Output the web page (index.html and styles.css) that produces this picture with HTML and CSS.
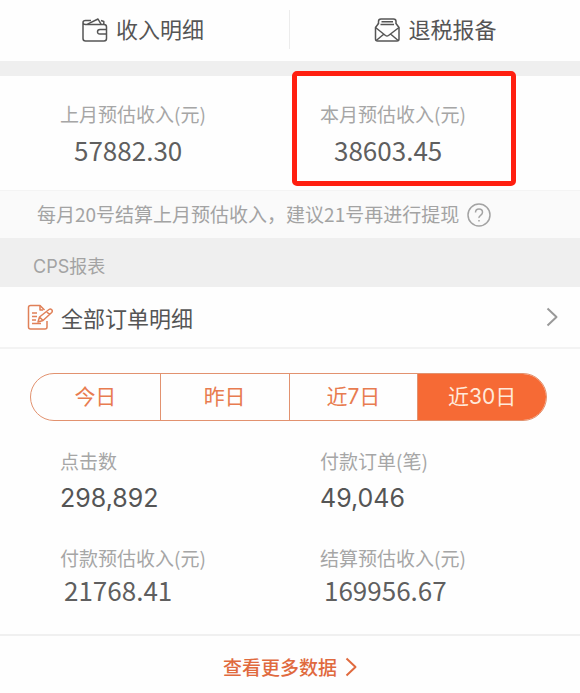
FILE: index.html
```
<!DOCTYPE html>
<html lang="zh-CN">
<head>
    <meta charset="UTF-8">
    <meta name="viewport" content="width=device-width, initial-scale=1.0">
    <title>CPS报表</title>
    <link rel="stylesheet" href="styles.css">
</head>
<body>

    <!-- Top navigation -->
    <nav class="top-nav">
        <a class="nav-item" href="#income">
            <svg class="nav-icon" viewBox="0 0 28 26" aria-hidden="true">
                <path d="M2 5.500V21.500q0 2.500 2.500 2.500H23q2.500 0 2.500-2.500V10q0-2.500-2.500-2.500H4.500Q2 7.500 2 5.500T4.500 3.500H10"/>
                <path d="M6.500 7.200L17 2l3 5.200M20 3.500l2.800 1v2.500"/>
                <path d="M25.500 12.500H19q-2.500 0-2.500 2.300t2.500 2.200h6.500"/>
            </svg>
            <span>收入明细</span>
        </a>
        <a class="nav-item" href="#tax">
            <svg class="nav-icon" viewBox="0 0 28 26" aria-hidden="true">
                <path d="M5.500 6.500L2.500 10.500V22q0 2 2 2H24q2 0 2-2V10.500L23 6.500"/>
                <path d="M5.500 7V4.500Q5.500 2 8 2H20.500Q23 2 23 4.500V7M8.500 4.800h11.500M7.500 7.500h13.500"/>
                <path d="M2.500 10.500L12.500 18.500q1.500 1 3 0L26 10.500M3.200 23.500L11 17M25.200 23.500L17.500 17"/>
            </svg>
            <span>退税报备</span>
        </a>
    </nav>

    <!-- Estimated income -->
    <section class="income" id="income">
        <div class="stat">
            <h3>上月预估收入(元)</h3>
            <p class="amount">57882.30</p>
        </div>
        <div class="stat highlight">
            <h3>本月预估收入(元)</h3>
            <p class="amount">38603.45</p>
        </div>
    </section>

    <div class="tip">
        <p>每月20号结算上月预估收入，建议21号再进行提现</p>
        <button class="help-btn" aria-label="帮助">
            <svg viewBox="0 0 24 24" aria-hidden="true">
                <circle cx="12" cy="12" r="11"/>
                <path d="M8.500 9.500Q8.500 6 12 6T15.500 9.300Q15.500 11 13.600 12.300T12 15M12 17v1.500"/>
            </svg>
        </button>
    </div>

    <h2 class="section-title">CPS报表</h2>

    <a class="order-row" href="#orders">
        <svg class="order-icon" viewBox="0 0 26 26" aria-hidden="true">
            <path d="M20 17v6q0 2-2 2H3.500q-2 0-2-2V3.500q0-2 2-2h9.500l4.500 4.500"/>
            <path d="M13 1.500v4.500h3M5 9h5M5 12.500h5M5 16h4M5 19.500h9"/>
            <path d="M11 18l1.500-5L22 5.500q1.500-1 2.700.2t0 2.800L16 16.500zM19.500 7.500l3 3M12.500 13l3.500 3.500"/>
        </svg>
        <span>全部订单明细</span>
        <svg class="arrow" viewBox="0 0 12 20" aria-hidden="true">
            <path d="M1.500 1.500L10.500 10L1.500 18.500"/>
        </svg>
    </a>

    <!-- Report -->
    <section class="report">
        <div class="tabs">
            <button>今日</button>
            <button>昨日</button>
            <button>近7日</button>
            <button class="active">近30日</button>
        </div>
        <div class="stats">
            <div class="stat">
                <h3>点击数</h3>
                <p class="count">298,892</p>
            </div>
            <div class="stat">
                <h3>付款订单(笔)</h3>
                <p class="count">49,046</p>
            </div>
            <div class="stat">
                <h3>付款预估收入(元)</h3>
                <p class="amount">21768.41</p>
            </div>
            <div class="stat">
                <h3>结算预估收入(元)</h3>
                <p class="amount">169956.67</p>
            </div>
        </div>
    </section>

    <a class="more" href="#more">
        <span>查看更多数据</span>
        <svg class="arrow" viewBox="0 0 12 20" aria-hidden="true">
            <path d="M1.500 1.500L10.500 10L1.500 18.500"/>
        </svg>
    </a>

</body>
</html>
```
FILE: styles.css
```
/* General Styles */
*,
*::after {
    margin: 0;
    padding: 0;
    box-sizing: border-box;
}

body {
    font-family: "Noto Sans CJK SC", sans-serif;
    background-color: #fefefe;
    color: #555;
}

a {
    color: inherit;
    text-decoration: none;
}

button {
    border: none;
    background: none;
    font-family: inherit;
    cursor: pointer;
}

svg {
    fill: none;
    stroke: currentColor;
    stroke-width: 1.5;
    stroke-linejoin: round;
    flex-shrink: 0;
}

/* Top navigation */
.top-nav {
    display: grid;
    grid-template-columns: 1fr 1fr;
    padding: 10px 0 12px;
    border-bottom: 15px solid #efefef;
}

.nav-item {
    display: flex;
    justify-content: center;
    align-items: center;
    gap: 7px;
    height: 39px;
    padding-right: 4px;
    font-size: 22px;
    line-height: 32px;
}

.nav-item:first-child {
    border-right: 1px solid #ececec;
}

.nav-item:last-child {
    padding-right: 0;
}

.nav-item span {
    padding-bottom: 3px;
}

.nav-icon {
    width: 28px;
    height: 26px;
}

/* Figures */
.income {
    display: grid;
    grid-template-columns: 1fr 1fr;
    padding: 24px 0 22px 60px;
    border-bottom: 1px solid #f4f4f4;
}

.stat h3 {
    font-size: 19px;
    font-weight: 400;
    line-height: 28px;
    color: #a6a6a6;
}

.amount {
    font-size: 26px;
    line-height: 36px;
    padding-left: 4px;
    color: #5f5f5f;
}

.income .amount {
    padding-left: 14px;
    padding-top: 4px;
}

.count {
    font-family: Inter, sans-serif;
    font-size: 25px;
    line-height: 44px;
    padding-top: 1px;
}

.highlight {
    position: relative;
}

.highlight::after {
    content: "";
    position: absolute;
    top: -29px;
    left: -28px;
    width: 224px;
    height: 115px;
    border: 5px solid #ff1f10;
    border-radius: 5px;
}

/* Settlement tip */
.tip {
    display: flex;
    align-items: center;
    gap: 8px;
    height: 47px;
    padding-left: 37px;
    background-color: #fafafa;
    color: #a3a3a3;
    font-size: 19px;
}

.tip p {
    padding-bottom: 2px;
}

.help-btn {
    width: 24px;
    height: 24px;
    color: #a3a3a3;
}

.help-btn svg {
    display: block;
}

.section-title {
    padding: 8px 33px 0;
    background-color: #efefef;
    color: #a3a3a3;
    font-family: Inter, "Noto Sans CJK SC", sans-serif;
    font-size: 18px;
    font-weight: 400;
    line-height: 41px;
}

.order-row {
    display: flex;
    align-items: center;
    gap: 8px;
    height: 62px;
    padding: 0 22px 0 27px;
    border-bottom: 2px solid #f3f3f3;
    font-size: 22px;
}

.order-icon {
    width: 26px;
    height: 26px;
    color: #e08058;
}

.arrow {
    width: 12px;
    height: 20px;
    stroke-width: 2;
}

.order-row .arrow {
    margin-left: auto;
    color: #999;
}

/* Report */
.tabs {
    display: grid;
    grid-template-columns: repeat(4, 1fr);
    margin: 24px 33px 0 30px;
    border: 1px solid #e2926f;
    border-radius: 24px;
    overflow: hidden;
}

.tabs button {
    height: 46px;
    padding-bottom: 4px;
    color: #e87c50;
    font-family: Inter, "Noto Sans CJK SC", sans-serif;
    font-size: 21px;
}

.tabs button + button {
    border-left: 1px solid #e2926f;
}

.tabs .active {
    background-color: #f66a35;
    color: #ffe9da;
}

.stats {
    display: grid;
    grid-template-columns: 1fr 1fr;
    row-gap: 24px;
    padding: 26px 0 26px 60px;
    border-bottom: 2px solid #f0f0f0;
}

.more {
    display: flex;
    justify-content: center;
    align-items: center;
    gap: 8px;
    height: 57px;
    padding-top: 4px;
    color: #e06a3e;
    font-size: 19px;
    font-weight: 500;
}
```
